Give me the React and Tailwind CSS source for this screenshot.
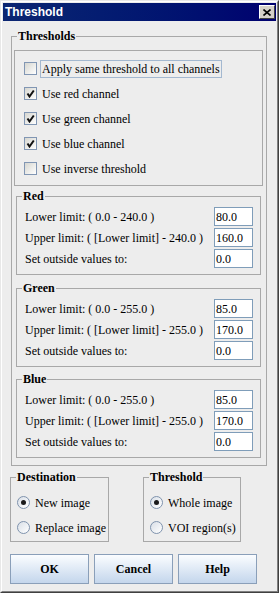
import React from 'react'

const Check = ({ checked }) => (
  <span className="flex h-[13px] w-[13px] shrink-0 items-center justify-center border border-[#8196b3] bg-linear-to-br from-[#d6d6d0] to-white">
    {checked && (
      <svg width="9" height="9" viewBox="0 0 9 9">
        <path d="M1.5 4.5 L3.5 7.5 L7.8 1.5" fill="none" stroke="#111" strokeWidth="2" />
      </svg>
    )}
  </span>
)

const Radio = ({ on }) => (
  <span className="flex h-[13px] w-[13px] shrink-0 items-center justify-center rounded-full border border-[#7f93ad] bg-linear-to-br from-[#d9dfe7] to-white">
    {on && <span className="h-[5px] w-[5px] rounded-full bg-[#1a1a1a]" />}
  </span>
)

const Group = ({ title, className, children }) => (
  <fieldset className={`border border-[#a8a8a8] ${className}`}>
    <legend className="ml-[5px] px-[1px] text-[12px] font-bold leading-[14px]">{title}</legend>
    {children}
  </fieldset>
)

const LimitRow = ({ label, value }) => (
  <div className="flex h-[19px] items-center justify-between">
    <span className="leading-[14px]">{label}</span>
    <div className="flex h-[19px] w-[39px] items-center border border-[#7f9db9] bg-white pl-[1px] leading-[14px]">{value}</div>
  </div>
)

const ColorGroup = ({ title, max, lower, upper, className }) => (
  <Group title={title} className={`ml-[2px] w-[245px] ${className}`}>
    <div className="flex flex-col gap-[2px] pb-[6px] pl-[8px] pr-[7px] pt-[4px]">
      <LimitRow label={`Lower limit: ( 0.0 - ${max} )`} value={lower} />
      <LimitRow label={`Upper limit: ( [Lower limit] - ${max} )`} value={upper} />
      <LimitRow label="Set outside values to:" value="0.0" />
    </div>
  </Group>
)

const checks = [
  ['Apply same threshold to all channels', false],
  ['Use red channel', true],
  ['Use green channel', true],
  ['Use blue channel', true],
  ['Use inverse threshold', false],
]

const Button = ({ children }) => (
  <button className="flex h-[30px] w-[79px] items-center justify-center border border-[#8a9fb9] bg-linear-to-b from-[#fbfdff] to-[#c4d6ec] text-[12px] font-bold">
    {children}
  </button>
)

export default function App() {
  return (
    <div className="h-[593px] w-[279px] border border-b-[#404040] border-l-[#e8e8e8] border-r-[#404040] border-t-[#e8e8e8]">
      <div className="flex h-full flex-col border border-b-[#808080] border-l-white border-r-[#808080] border-t-white bg-[#ededed] p-[1px]">
        <div className="flex h-[18px] shrink-0 items-center justify-between bg-linear-to-r from-[#0c2672] to-[#00006f] pl-[2px] pr-[1px]">
          <span className="font-['Liberation_Sans',Arial,sans-serif] text-[12px] font-bold leading-[14px] text-white">Threshold</span>
          <span className="flex h-[14px] w-[16px] items-center justify-center border border-b-[#404040] border-l-white border-r-[#404040] border-t-white bg-[#d4d0c8]">
            <svg width="8" height="7" viewBox="0 0 8 7">
              <path d="M0.5 0.5 L7.5 6.5 M7.5 0.5 L0.5 6.5" stroke="#000" strokeWidth="1.6" />
            </svg>
          </span>
        </div>

        <div className="flex flex-1 flex-col font-['Liberation_Serif','Times_New_Roman',serif] text-[12px] text-black">
          <Group title="Thresholds" className="ml-[8px] mt-[8px] w-[256px]">
            <div className="px-[2px] pb-[7px] pt-[7px]">
              <div className="w-[249px] border border-[#a8a8a8] pb-[4px] pl-[9px] pt-[5px]">
                {checks.map(([label, on], i) => (
                  <div key={label} className="flex h-[25px] items-center gap-[3px]">
                    <Check checked={on} />
                    <span className={`px-[1px] leading-[16px] ${i === 0 ? 'border border-[#a3b8d0]' : 'border border-transparent'}`}>{label}</span>
                  </div>
                ))}
              </div>
              <ColorGroup title="Red" max="240.0" lower="80.0" upper="160.0" className="mt-[3px]" />
              <ColorGroup title="Green" max="255.0" lower="85.0" upper="170.0" className="mt-[6px]" />
              <ColorGroup title="Blue" max="255.0" lower="85.0" upper="170.0" className="mt-[5px]" />
            </div>
          </Group>

          <div className="mt-[4px] flex">
            <Group title="Destination" className="ml-[7px] w-[99px]">
              <div className="pb-[1px] pl-[6px] pt-[6px]">
                <div className="flex h-[25px] items-center gap-[5px]"><Radio on />New image</div>
                <div className="flex h-[25px] items-center gap-[5px]"><Radio />Replace image</div>
              </div>
            </Group>
            <Group title="Threshold" className="ml-[34px] w-[98px]">
              <div className="pb-[1px] pl-[6px] pt-[6px]">
                <div className="flex h-[25px] items-center gap-[5px]"><Radio on />Whole image</div>
                <div className="flex h-[25px] items-center gap-[5px]"><Radio />VOI region(s)</div>
              </div>
            </Group>
          </div>

          <div className="ml-[7px] mt-[12px] flex gap-[5px]">
            <Button>OK</Button>
            <Button>Cancel</Button>
            <Button>Help</Button>
          </div>
        </div>
      </div>
    </div>
  )
}
